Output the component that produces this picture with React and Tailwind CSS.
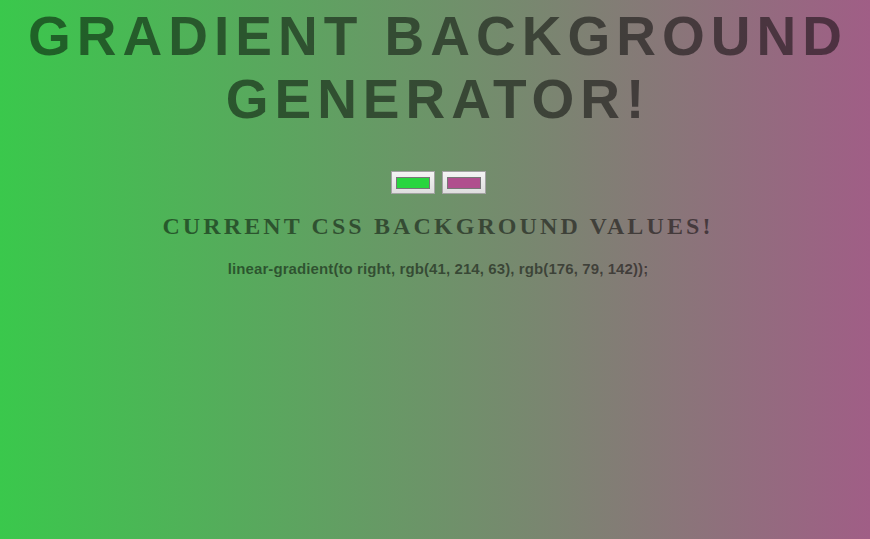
export default function App() {
  return (
    <div
      className="min-h-[539px] w-full bg-[linear-gradient(to_right,#3ac84c,#a05e86)] pl-[6px] text-center uppercase text-black/50"
      style={{ fontFamily: '"Liberation Sans", Arial, sans-serif' }}
    >
      <h1 className="pt-[5px] text-[55px] font-bold leading-[63px] tracking-[6px]">
        Gradient Background Generator!
      </h1>
      <div className="mt-[40px] flex justify-center gap-[7px]">
        <div className="flex h-[23px] w-[44px] items-center justify-center border border-[#a3a3a3] bg-[linear-gradient(to_bottom,#f4f4f4,#dedede)]">
          <div className="h-[12px] w-[34px] border border-[#777] bg-[#29d63f]" />
        </div>
        <div className="flex h-[23px] w-[44px] items-center justify-center border border-[#a3a3a3] bg-[linear-gradient(to_bottom,#f4f4f4,#dedede)]">
          <div className="h-[12px] w-[34px] border border-[#777] bg-[#b04f8e]" />
        </div>
      </div>
      <h3
        className="mt-[17px] text-[24px] font-bold leading-[30px] tracking-[3.1px]"
        style={{ fontFamily: '"Liberation Serif", "Times New Roman", serif' }}
      >
        Current CSS Background Values!
      </h3>
      <p className="mt-[19px] text-[15px] font-bold normal-case leading-[18px] tracking-[0.1px]">
        linear-gradient(to right, rgb(41, 214, 63), rgb(176, 79, 142));
      </p>
    </div>
  );
}
